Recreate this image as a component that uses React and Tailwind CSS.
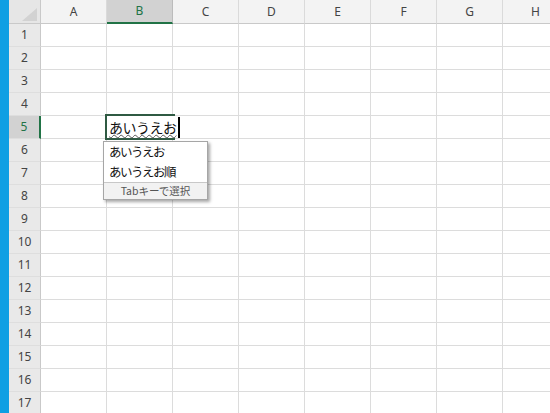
const cols = ['A', 'B', 'C', 'D', 'E', 'F', 'G', 'H', 'I']
const rows = Array.from({ length: 18 }, (_, i) => i + 1)

export default function App() {
  return (
    <div className="relative w-[550px] h-[413px] overflow-hidden bg-white flex" style={{ fontFamily: '"Noto Sans", "Liberation Sans", sans-serif' }}>
      {/* window edge */}
      <div className="w-[9px] shrink-0 bg-[#0f9fe3]" />

      <div className="flex-1 flex flex-col min-w-0">
        {/* column headers */}
        <div className="flex h-[24px] shrink-0">
          <div className="w-[32px] shrink-0 bg-[#e6e6e6] border-r border-b border-[#c9c9c9] relative">
            <svg className="absolute right-[3px] bottom-[2px]" width="15" height="13" viewBox="0 0 15 13">
              <polygon points="15,0 15,13 0,13" fill="#d2d2d2" />
            </svg>
          </div>
          {cols.map((c) => (
            <div
              key={c}
              className={`w-[66px] shrink-0 flex items-center justify-center text-[12px] border-r ${
                c === 'B'
                  ? 'bg-[#d2d2d2] text-[#217346] border-r-[#bcbcbc] border-b-2 border-b-[#217346]'
                  : 'bg-[#f3f3f3] text-[#444] border-r-[#dadada] border-b border-b-[#c9c9c9]'
              }`}
            >
              {c}
            </div>
          ))}
        </div>

        {/* rows */}
        {rows.map((r) => (
          <div key={r} className="flex h-[23px] shrink-0">
            <div
              className={`w-[32px] shrink-0 flex items-center justify-center text-[12px] border-b border-b-[#dedede] ${
                r === 5
                  ? 'bg-[#d2d2d2] text-[#217346] border-r-2 border-r-[#217346]'
                  : 'bg-[#e9e9e9] text-[#444] border-r border-r-[#c9c9c9]'
              }`}
            >
              {r}
            </div>
            {cols.map((c) => (
              <div key={c} className="w-[66px] shrink-0 border-r border-b border-[#dcdcdc]" />
            ))}
          </div>
        ))}
      </div>

      {/* cell editor B5 */}
      <div className="absolute left-[105px] top-[114px] w-[70px] h-[26px] border-2 border-[#2f5a43] bg-white" />
      <div
        className="absolute left-[109px] top-[116px] h-[22px] flex items-center text-[14px] tracking-[-0.5px] text-[#111] underline decoration-wavy decoration-[#555] decoration-1 underline-offset-[1px] whitespace-nowrap bg-white"
        style={{ fontFamily: '"Noto Sans CJK JP", sans-serif' }}
      >
        あいうえお
      </div>
      <div className="absolute left-[178px] top-[117px] w-[2px] h-[21px] bg-black" />

      {/* autocomplete dropdown */}
      <div
        className="absolute left-[103px] top-[141px] w-[105px] bg-white border border-[#a6a6a6] shadow-[2px_2px_3px_rgba(0,0,0,0.35)] flex flex-col"
        style={{ fontFamily: '"Noto Sans CJK JP", sans-serif' }}
      >
        <div className="h-[20px] flex items-center pl-[5px] text-[12.5px] tracking-[-1.5px] text-[#111]">あいうえお</div>
        <div className="h-[20px] flex items-center pl-[5px] text-[12.5px] tracking-[-1.5px] text-[#111]">あいうえお順</div>
        <div className="h-[17px] flex items-center justify-center border-t border-[#c8c8c8] bg-[#f2f2f2] text-[10.5px] text-[#555]">
          Tabキーで選択
        </div>
      </div>
    </div>
  )
}
